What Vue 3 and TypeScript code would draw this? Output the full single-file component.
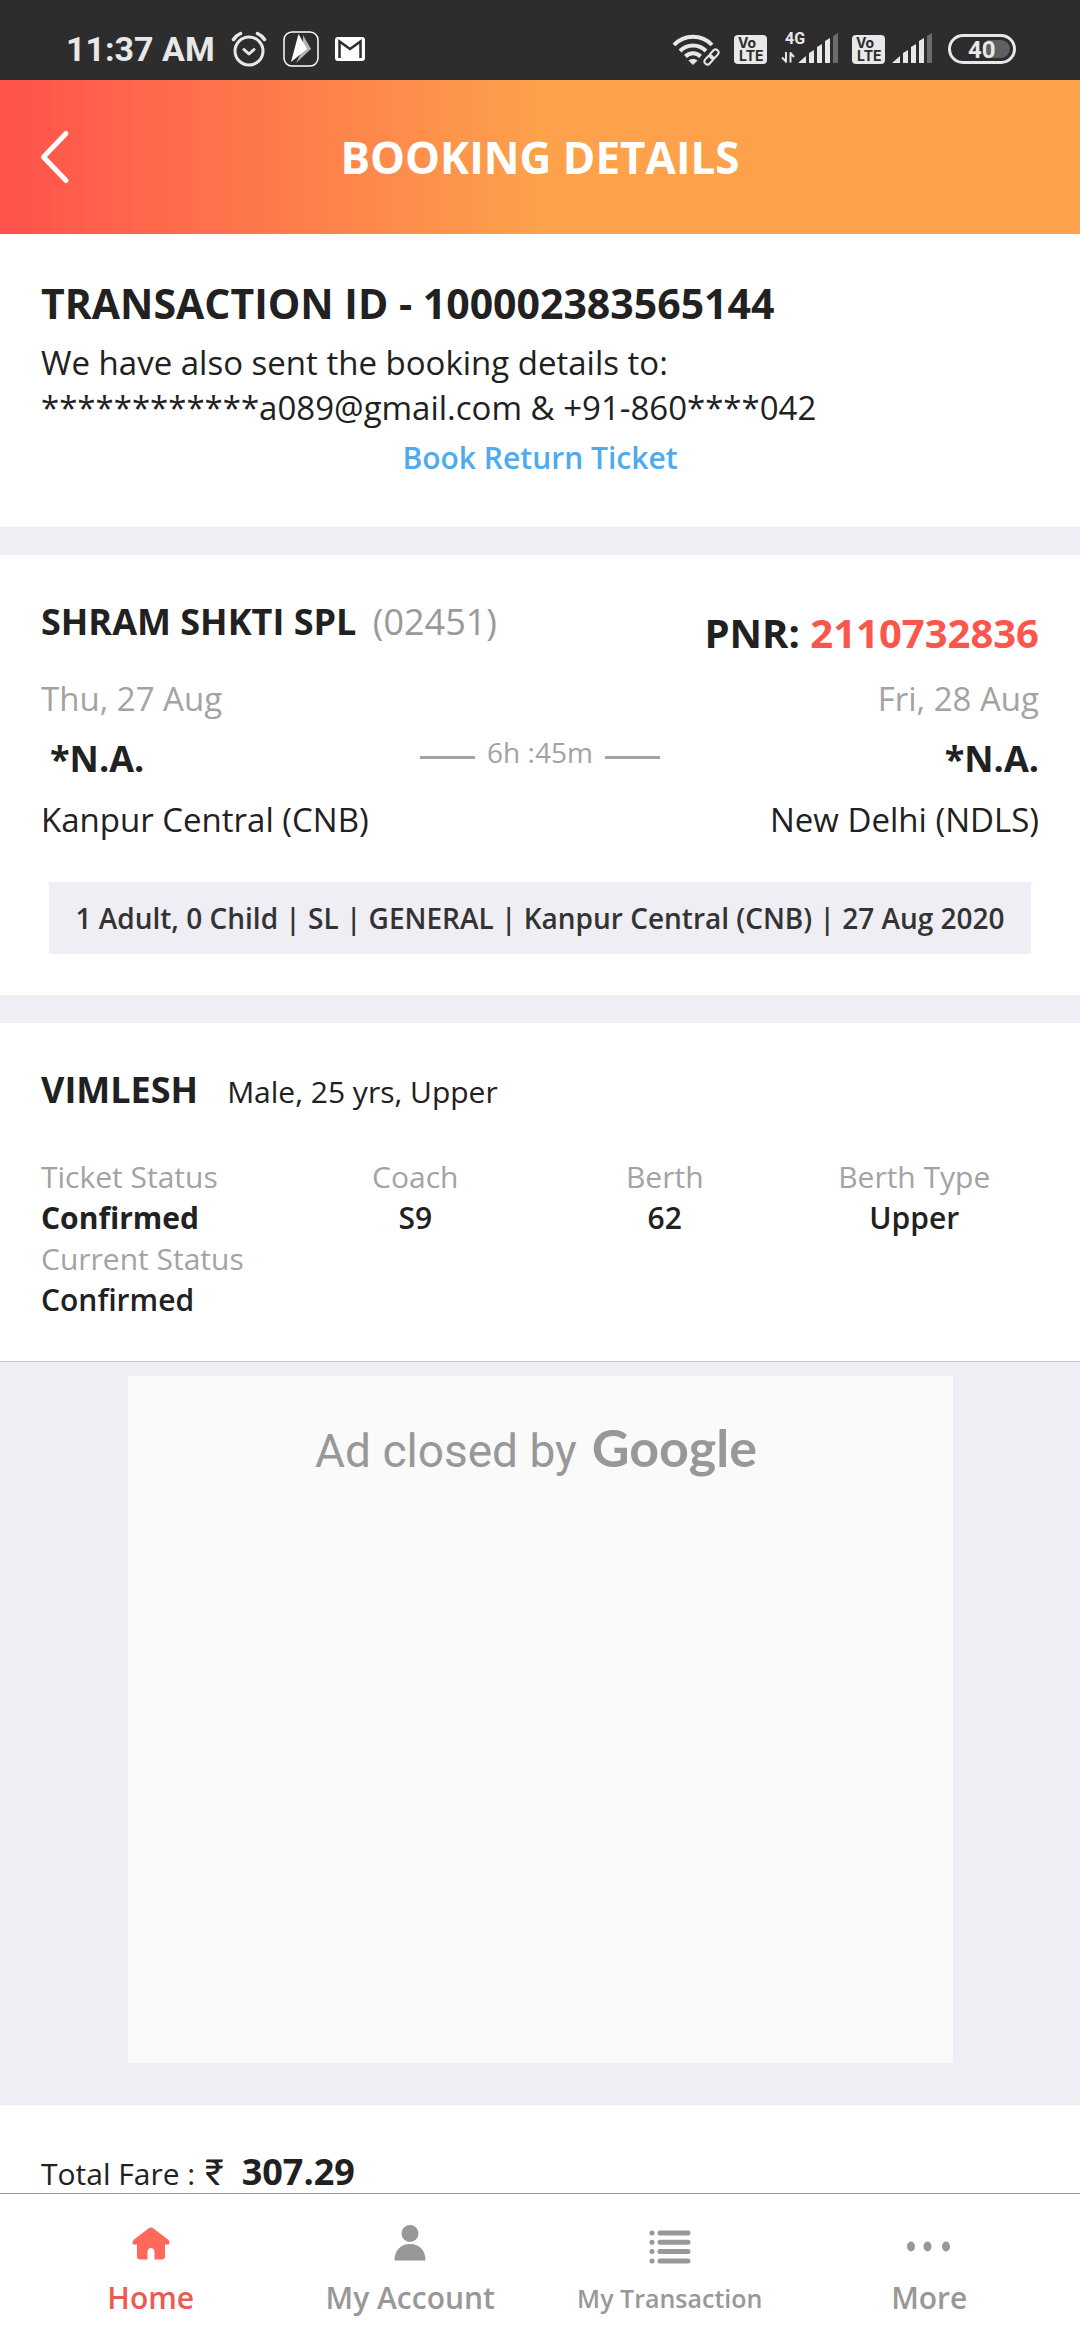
<script setup lang="ts">
interface Cell {
  label: string
  value: string
}

interface NavItem {
  id: string
  label: string
  small?: boolean
  active?: boolean
}

const coachCells: Cell[] = [
  { label: 'Coach', value: 'S9' },
  { label: 'Berth', value: '62' },
  { label: 'Berth Type', value: 'Upper' },
]

const navItems: NavItem[] = [
  { id: 'home', label: 'Home', active: true },
  { id: 'account', label: 'My Account' },
  { id: 'transaction', label: 'My Transaction', small: true },
  { id: 'more', label: 'More' },
]
</script>

<template>
  <div class="page">
    <div class="status">
      <div class="status-side">
        <span class="clock">11:37 AM</span>
        <svg width="36" height="36" viewBox="0 0 36 36" fill="none" stroke="#e8e8e8" stroke-linecap="round" stroke-linejoin="round">
          <circle cx="18" cy="20" r="14" stroke-width="3" />
          <path d="M13 18.500l5 4.500 5-4.500" stroke-width="3" />
          <path d="M2.500 8.500Q5 4.500 9.500 2.500M33.500 8.500Q31 4.500 26.500 2.500" stroke-width="3.500" />
        </svg>
        <svg width="36" height="36" viewBox="0 0 36 36">
          <rect x="1" y="1" width="34" height="34" rx="8" fill="none" stroke="#fff" stroke-width="1.500" />
          <path d="M20 4l8 14-15 14 7-14z" fill="#b4b4b4" />
          <path d="M15.500 3L24 18 8 31z" fill="#fff" />
        </svg>
        <svg width="30" height="36" viewBox="0 0 30 36">
          <rect x="0" y="6" width="30" height="24" rx="3" fill="#fff" />
          <path d="M4.500 27V10.500L15 18l10.500-7.500V27" fill="none" stroke="#2d2d2d" stroke-width="2.500" />
        </svg>
      </div>
      <div class="status-side status-right">
        <svg width="48" height="36" viewBox="0 0 48 36" fill="none" stroke="#e8e8e8">
          <path d="M2 14A26 26 0 0 1 40 14M8 20A18 18 0 0 1 34 20M13.500 25.500A10.500 10.500 0 0 1 28.500 25.500" stroke-width="4" />
          <path d="M17 29.500Q21 27 25 29.500L21 33.500z" fill="#e8e8e8" stroke-linejoin="round" />
          <g transform="rotate(-48 39.500 26)" stroke="#2d2d2d" stroke-width="6">
            <rect x="30.500" y="23" width="10" height="6" rx="3" />
            <rect x="38.500" y="23" width="10" height="6" rx="3" />
          </g>
          <g transform="rotate(-48 39.500 26)" stroke-width="2">
            <rect x="30.500" y="23" width="10" height="6" rx="3" />
            <rect x="38.500" y="23" width="10" height="6" rx="3" />
          </g>
        </svg>
        <svg class="volte" width="33" height="36" viewBox="0 0 33 36">
          <rect x="0" y="4" width="33" height="29" rx="4" fill="#e8e8e8" />
          <text x="4" y="17" font-size="14">Vo</text>
          <text x="5" y="30" font-size="14">LTE</text>
        </svg>
        <svg class="network" width="57" height="48" viewBox="0 -6 57 48" fill="#e8e8e8">
          <text x="4" y="13" font-size="16">4G</text>
          <path d="M5 21v10.500M5.500 31L1 26.500M9.500 31.500V21.500M9 21.500l4 4.500" fill="none" stroke="#e8e8e8" stroke-width="2" />
          <path d="M17 32l8-7v7zM28 22l5-3v13h-5zM36 16l5-3v19h-5zM44 10l5-3v25h-5z" />
          <path d="M52 5l5-3v30h-5z" fill="#6c6c6c" />
        </svg>
        <div class="pair">
          <svg class="volte" width="33" height="36" viewBox="0 0 33 36">
            <rect x="0" y="4" width="33" height="29" rx="4" fill="#e8e8e8" />
            <text x="4" y="17" font-size="14">Vo</text>
            <text x="5" y="30" font-size="14">LTE</text>
          </svg>
          <svg width="42" height="36" viewBox="0 0 42 36" fill="#e8e8e8">
            <path d="M0 32l8-7v7zM11 22l5-3v13h-5zM19 16l5-3v19h-5zM27 10l5-3v25h-5z" />
            <path d="M35 5l5-3v30h-5z" fill="#6c6c6c" />
          </svg>
        </div>
        <svg class="network" width="68" height="36" viewBox="0 0 68 36">
          <rect x="1.500" y="4.500" width="65" height="27" rx="13.500" fill="none" stroke="#e8e8e8" stroke-width="3" />
          <path d="M39 9h14a9 9 0 0 1 0 18H39z" fill="#606060" />
          <text x="20" y="27" font-size="24" fill="#e8e8e8">40</text>
        </svg>
      </div>
    </div>

    <header class="header">
      <button class="back" type="button" aria-label="Back">
        <svg width="32" height="56" viewBox="0 0 32 56" fill="none" stroke="#fff" stroke-width="5" stroke-linecap="round" stroke-linejoin="round">
          <path d="M26 4.500L3.500 28 26 51.500" />
        </svg>
      </button>
      <h1 class="title">BOOKING DETAILS</h1>
    </header>

    <main class="content">
      <section class="card transaction">
        <h2 class="heading">TRANSACTION ID - 100002383565144</h2>
        <p class="note">We have also sent the booking details to:<br />************a089@gmail.com &amp; +91-860****042</p>
        <a class="return-link" href="#">Book Return Ticket</a>
      </section>

      <section class="card train">
        <div class="row">
          <h3 class="name">SHRAM SHKTI SPL <span class="number">(02451)</span></h3>
          <p class="pnr">PNR: <span class="pnr-value">2110732836</span></p>
        </div>
        <div class="row dates">
          <span>Thu, 27 Aug</span>
          <span>Fri, 28 Aug</span>
        </div>
        <div class="row times">
          <strong class="time-from">*N.A.</strong>
          <span class="duration">6h :45m</span>
          <strong class="time-to">*N.A.</strong>
        </div>
        <div class="row stations">
          <span>Kanpur Central (CNB)</span>
          <span>New Delhi (NDLS)</span>
        </div>
        <p class="summary">1 Adult, 0 Child | SL | GENERAL | Kanpur Central (CNB) | 27 Aug 2020</p>
      </section>

      <section class="card passenger">
        <div class="person">
          <h3 class="name">VIMLESH</h3>
          <span class="about">Male, 25 yrs, Upper</span>
        </div>
        <div class="cells">
          <dl class="cell first">
            <dt>Ticket Status</dt>
            <dd class="strong">Confirmed</dd>
            <dt>Current Status</dt>
            <dd>Confirmed</dd>
          </dl>
          <dl v-for="cell in coachCells" :key="cell.label" class="cell">
            <dt>{{ cell.label }}</dt>
            <dd>{{ cell.value }}</dd>
          </dl>
        </div>
      </section>

      <aside class="ad-area">
        <div class="ad">
          <p class="ad-text"><span>Ad closed by</span><span class="brand">Google</span></p>
        </div>
      </aside>

      <section class="card fare">
        <p class="fare-line">Total Fare : <span class="rupee">₹</span><strong class="amount">307.29</strong></p>
      </section>
    </main>

    <nav class="nav">
      <a v-for="item in navItems" :key="item.id" href="#" class="nav-item" :class="{ active: item.active, small: item.small }">
        <svg v-if="item.id === 'home'" width="48" height="48" viewBox="0 0 48 48" fill="#ff695c">
          <path d="M21.500 8.500Q24 6.500 26.500 8.500L41 19.500Q43.500 22 42 24.500H38V36.500Q38 39.500 35 39.500H27.500V32Q27 28 24 28T20.500 32V39.500H13Q10 39.500 10 36.500V24.500H6Q4.500 22 7 19.500z" />
        </svg>
        <svg v-else-if="item.id === 'account'" width="48" height="48" viewBox="0 0 48 48" fill="#989898">
          <circle cx="24" cy="13.500" r="8.500" />
          <path d="M8.500 40.500C8.500 31 14 24 24 24S39.500 31 39.500 40.500z" />
        </svg>
        <svg v-else-if="item.id === 'transaction'" width="48" height="48" viewBox="0 0 48 48" fill="none" stroke="#989898" stroke-width="5" stroke-linecap="round">
          <path d="M14 13h28M14 22.300h28M14 31.600h28M14 41h28" />
          <path d="M6 13h0.100M6 22.300h0.100M6 31.600h0.100M6 41h0.100" />
        </svg>
        <svg v-else width="48" height="48" viewBox="0 0 48 48" fill="#989898">
          <ellipse cx="6" cy="26.500" rx="4" ry="5" />
          <ellipse cx="22.500" cy="26.500" rx="4" ry="5" />
          <ellipse cx="41" cy="26.500" rx="4" ry="5" />
        </svg>
        <span>{{ item.label }}</span>
      </a>
    </nav>
  </div>
</template>

<style>
body {
  margin: 0;
  background: #fff;
}
</style>

<style scoped>
.page {
  display: flex;
  flex-direction: column;
  min-height: 100vh;
  background: #fff;
  color: #212121;
  font-family: "Open Sans", "Noto Sans", sans-serif;
}

h1,
h2,
h3,
p,
dl,
dd {
  margin: 0;
}

svg {
  display: block;
  flex: none;
}

a {
  text-decoration: none;
}

.status {
  display: flex;
  justify-content: space-between;
  align-items: center;
  box-sizing: border-box;
  height: 80px;
  padding: 18px 64px 0 66px;
  background: #2d2d2d;
}

.status-side {
  display: flex;
  align-items: center;
  gap: 16px;
}

.status-right {
  gap: 14px;
}

.pair {
  display: flex;
  gap: 7px;
}

.clock {
  color: #e8e8e8;
  font: 700 34px/40px Roboto, sans-serif;
}

.volte text {
  fill: #2d2d2d;
  font-family: Inter, sans-serif;
  font-weight: 700;
}

.network text {
  font-family: Roboto, sans-serif;
  font-weight: 700;
}

.header {
  display: grid;
  grid-template-columns: 80px 1fr 80px;
  align-items: center;
  height: 154px;
  background: linear-gradient(90deg, #ff524b 0%, #fda14b 50%);
}

.back {
  padding: 0 0 0 40px;
  border: 0;
  background: none;
}

.title {
  color: #fff;
  font-size: 44px;
  font-weight: 700;
  line-height: 60px;
  text-align: center;
}

.content {
  flex: 1;
  background: #efeef4;
}

.card {
  background: #fff;
  padding-left: 41px;
  padding-right: 41px;
}

.transaction {
  padding-top: 42px;
  padding-bottom: 48px;
  margin-bottom: 28px;
}

.heading {
  font-size: 41px;
  font-weight: 700;
  line-height: 54px;
}

.note {
  margin-top: 10px;
  font-size: 33px;
  line-height: 45px;
}

.return-link {
  display: block;
  margin-top: 7px;
  color: #50aaee;
  font-size: 30px;
  font-weight: 600;
  line-height: 42px;
  text-align: center;
}

.train {
  padding-top: 42px;
  padding-bottom: 41px;
  margin-bottom: 28px;
}

.row {
  display: flex;
  justify-content: space-between;
}

.name {
  font-size: 36px;
  font-weight: 700;
  line-height: 50px;
}

.number {
  margin-left: 7px;
  color: #999;
  font-weight: 400;
}

.pnr {
  padding-top: 9px;
  font-size: 40px;
  font-weight: 700;
  line-height: 54px;
}

.pnr-value {
  color: #fa564c;
}

.dates {
  margin-top: 16px;
  color: #a3a3a3;
  font-size: 33px;
  line-height: 45px;
}

.times {
  display: grid;
  grid-template-columns: 1fr auto 1fr;
  margin-top: 13px;
  font-size: 36px;
  line-height: 50px;
}

.time-from {
  padding-left: 9px;
}

.time-to {
  text-align: right;
}

.duration {
  display: flex;
  align-items: center;
  gap: 12px;
  height: 36px;
  color: #a3a3a3;
  font-size: 28px;
}

.duration::before,
.duration::after {
  content: "";
  width: 55px;
  height: 3px;
  margin-top: 11px;
  background: #a3a3a3;
}

.stations {
  margin-top: 13px;
  font-size: 33px;
  line-height: 45px;
}

.summary {
  margin: 40px 8px 0;
  background: #efeef4;
  color: #333;
  font-size: 28px;
  font-weight: 600;
  line-height: 72px;
  text-align: center;
  white-space: nowrap;
}

.passenger {
  padding-top: 42px;
  padding-bottom: 41px;
  border-bottom: 1px solid #c6c6c6;
}

.person {
  display: flex;
  align-items: baseline;
  gap: 29px;
}

.about {
  font-size: 30px;
}

.cells {
  display: grid;
  grid-template-columns: repeat(4, 1fr);
  margin-top: 41px;
  font-size: 30px;
  line-height: 41px;
}

.cell {
  text-align: center;
}

.cell.first {
  text-align: left;
}

dt {
  color: #a3a3a3;
}

dd {
  font-weight: 600;
}

dd.strong {
  font-weight: 700;
}

.ad-area {
  padding: 14px 0 42px;
}

.ad {
  box-sizing: border-box;
  width: 825px;
  max-width: 100%;
  height: 687px;
  margin: 0 auto;
  padding: 44px 8px 0 0;
  background: #fafafa;
}

.ad-text {
  display: flex;
  justify-content: center;
  align-items: baseline;
  gap: 15px;
  color: #989898;
  font: 400 46px/54px Roboto, sans-serif;
}

.brand {
  font-family: Lato, sans-serif;
  font-size: 52px;
  font-weight: 700;
}

.fare {
  padding-top: 47px;
  padding-bottom: 1px;
}

.fare-line {
  height: 40px;
  font-size: 30px;
  line-height: 40px;
}

.rupee {
  margin-left: 2px;
  font-family: Roboto, "Noto Sans", sans-serif;
  font-size: 36px;
}

.amount {
  margin-left: 18px;
  font-size: 36px;
}

.nav {
  position: sticky;
  bottom: 0;
  display: grid;
  grid-template-columns: repeat(4, 1fr);
  padding: 26px 21px 21px;
  border-top: 1px solid #999;
  background: #fff;
}

.nav-item {
  display: flex;
  flex-direction: column;
  align-items: center;
  gap: 9px;
  color: #989898;
  font-size: 30px;
  font-weight: 600;
  line-height: 42px;
}

.nav-item.small {
  font-size: 25px;
}

.nav-item.active {
  color: #ea5c52;
}
</style>
